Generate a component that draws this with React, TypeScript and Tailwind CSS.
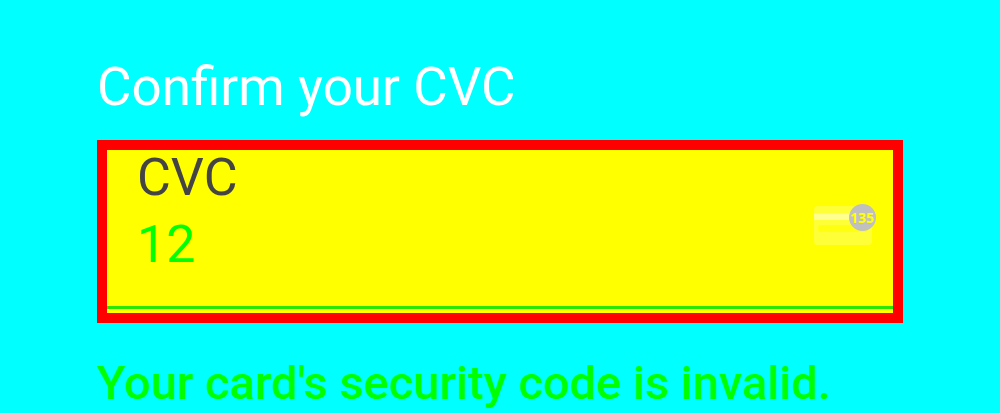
function CardCodeIcon() {
  return (
    <svg viewBox="0 0 66 42" className="mt-[54px] mr-4 h-[42px] w-[66px] shrink-0" aria-hidden="true">
      <rect x="3" y="2" width="58" height="39" rx="4" fill="#ffff38" />
      <rect x="3" y="9.5" width="58" height="6.5" fill="#ffff90" />
      <rect x="7" y="21" width="50" height="7" rx="3" fill="#ffff10" />
      <circle cx="51.5" cy="13.5" r="13.5" fill="#c0c0c0" />
      <text x="51" y="19" textAnchor="middle" fontSize="14" fontWeight="700" fill="#ffff00" fontFamily="'Noto Sans', sans-serif">
        135
      </text>
    </svg>
  );
}

export default function App() {
  return (
    <main className="min-h-screen bg-[#00ffff] px-[97px] pt-[57px] font-['Roboto',sans-serif]">
      <form>
        <h1 className="text-[53px] leading-[60px] font-normal text-white">Confirm your CVC</h1>
        <div className="mt-[23px] border-[10px] border-[#ff0000] bg-[#ffff00] pb-1">
          <div className="flex items-start border-b-3 border-[#28e800] pb-[22px] pl-[30px]">
            <div className="flex min-w-0 grow flex-col">
              <label htmlFor="cvc" className="text-[52px] leading-[56px] text-[#444444]">CVC</label>
              <input
                id="cvc"
                defaultValue="12"
                inputMode="numeric"
                aria-invalid="true"
                aria-describedby="cvc-error"
                className="h-[78px] w-full bg-transparent text-[52px] text-[#00ff00] outline-none"
              />
            </div>
            <CardCodeIcon />
          </div>
        </div>
        <p id="cvc-error" className="mt-[30px] text-[47px] leading-[60px] font-medium text-[#00ff00]">
          Your card's security code is invalid.
        </p>
      </form>
    </main>
  );
}
